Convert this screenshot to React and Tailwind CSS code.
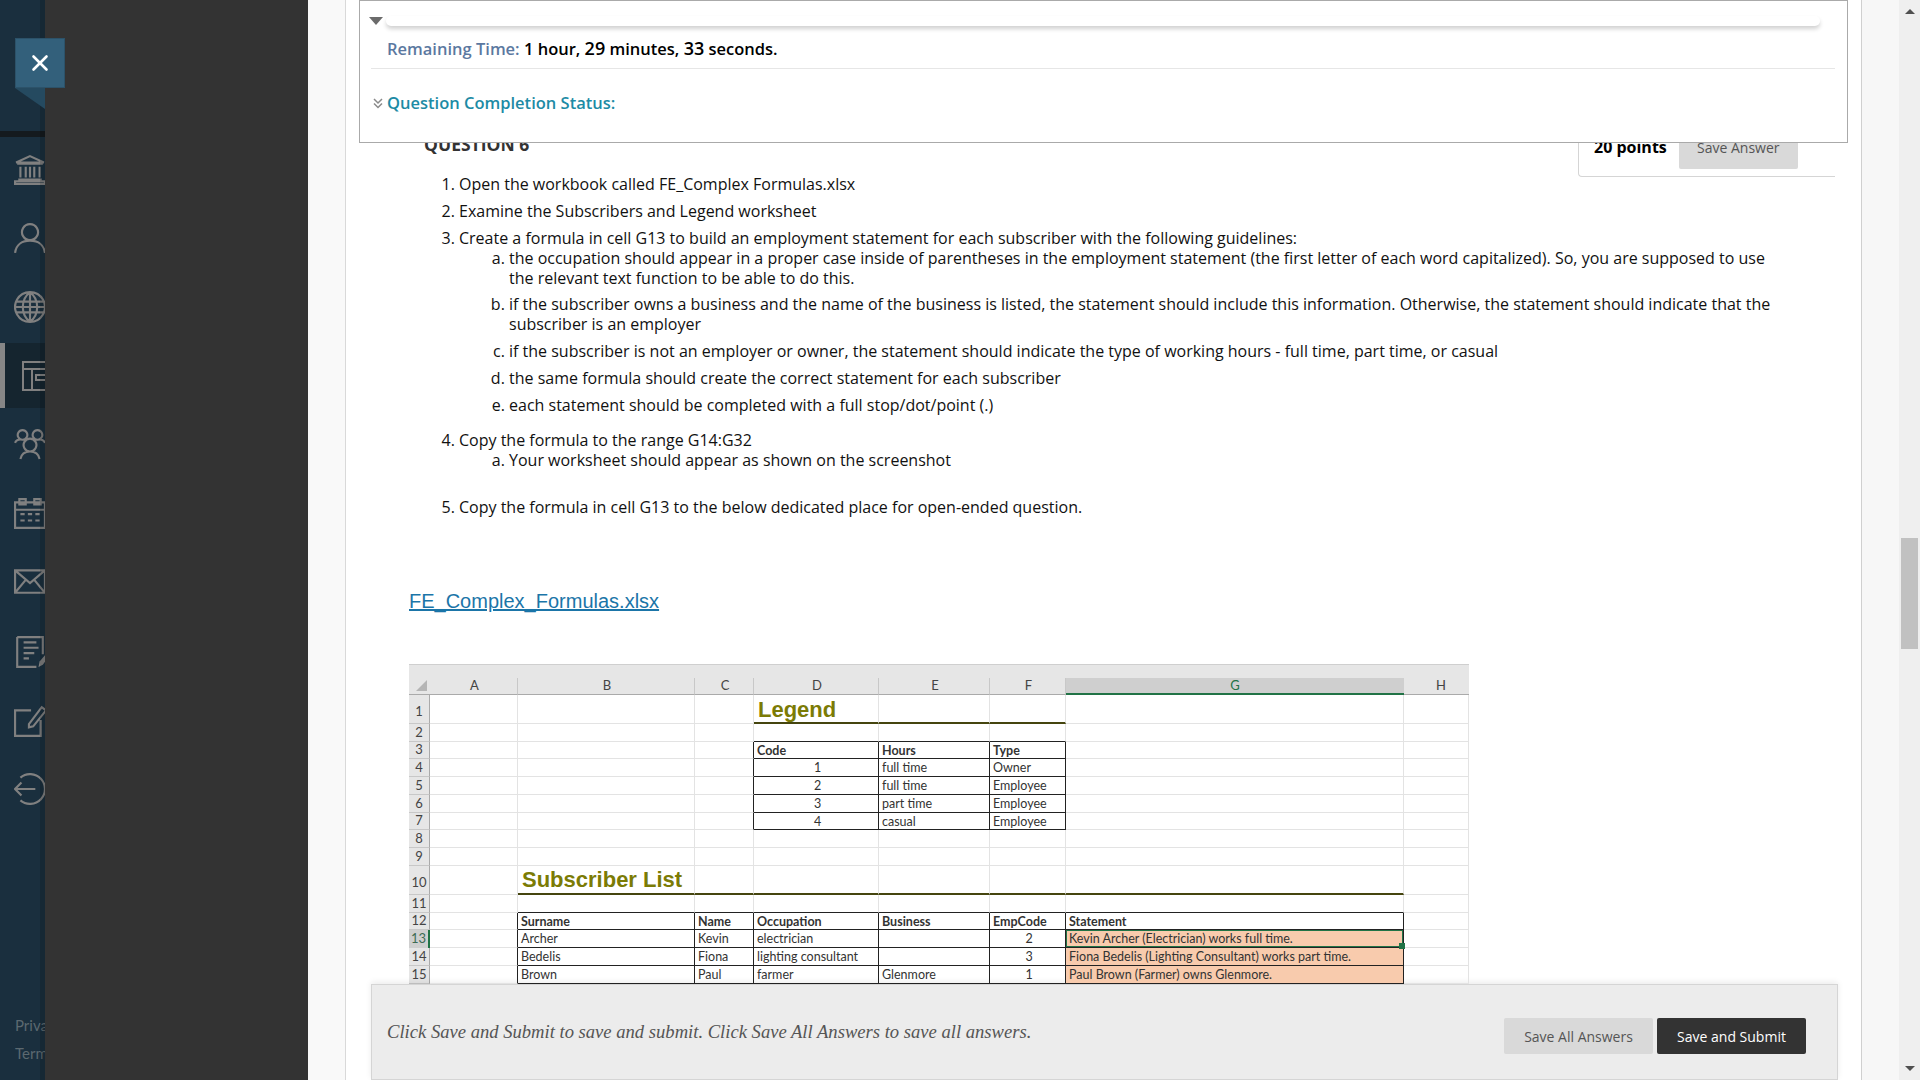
import { X } from "lucide-react";

const railIcons = [
  {
    name: "institution",
    d: "M15 2 L28 8 H2 Z M3 9 H27 M6 12 V22 M11 12 V22 M15 12 V22 M19 12 V22 M24 12 V22 M4 24 H26 M1 28 H29 V25.5 H1 Z",
  },
  {
    name: "profile",
    d: "M15 2 a7.5 7.5 0 1 0 0.01 0 Z M1 29 C2 21 8 17.5 15 17.5 C22 17.5 28 21 29 29",
  },
  {
    name: "globe",
    d: "M15 1 a14 14 0 1 0 0.01 0 Z M15 1 C6 8 6 22 15 29 C24 22 24 8 15 1 M15 1 V29 M2 10 H28 M2 20 H28 M1 15 H29",
  },
  {
    name: "courses",
    active: true,
    d: "M1 1 H32 V29 H1 Z M1 8 H32 M10 8 V29 M14 14 H24 V19 H14 Z",
  },
  {
    name: "groups",
    d: "M8 2 a4.5 4.5 0 1 0 0.01 0 Z M22 2 a4.5 4.5 0 1 0 0.01 0 Z M1 14 C2 11 5 10.5 8 11 M29 14 C28 11 25 10.5 22 11 M15 10 a6 6 0 1 0 0.01 0 Z M6 29 C7 24 10 22 15 22 C20 22 23 24 24 29",
  },
  {
    name: "calendar",
    d: "M1 5 H29 V29 H1 Z M5 2 H11 V7 H5 Z M19 2 H25 V7 H19 Z M1 12 H29 M6 16 H10 M13 16 H17 M20 16 H24 M6 22 H10 M13 22 H17 M20 22 H24",
  },
  {
    name: "messages",
    d: "M1 5 H29 V26 H1 Z M1 5 L15 17 L29 5 M1 26 L11 14 M29 26 L19 14",
  },
  {
    name: "grades",
    d: "M3 1 H27 V17 M21 29 H3 V1 M9 6 H21 M9 11 H23 M9 16 H19 M9 21 H14",
    pen: "M23 29 L24 24 L29 18 L32 20 L27 27 Z",
  },
  {
    name: "tools",
    d: "M16 5 H1 V29 H25 V14 M14 18 L26 2 L30 5 L18 20 L14 21 Z",
  },
  {
    name: "sign out",
    d: "M6 4.3 A14 14 0 1 1 6 25.7 M1 15 H20 M7 9 L1 15 L7 21",
  },
];

const sheetCols = ["A", "B", "C", "D", "E", "F", "G", "H"];
const rowNumbers = [1, 2, 3, 4, 5, 6, 7, 8, 9, 10, 11, 12, 13, 14, 15];

// sheet content, keyed by row then column
const cells = {
  3: { D: "Code", E: "Hours", F: "Type" },
  4: { D: "1", E: "full time", F: "Owner" },
  5: { D: "2", E: "full time", F: "Employee" },
  6: { D: "3", E: "part time", F: "Employee" },
  7: { D: "4", E: "casual", F: "Employee" },
  12: { B: "Surname", C: "Name", D: "Occupation", E: "Business", F: "EmpCode", G: "Statement" },
  13: { B: "Archer", C: "Kevin", D: "electrician", F: "2", G: "Kevin Archer (Electrician) works full time." },
  14: { B: "Bedelis", C: "Fiona", D: "lighting consultant", F: "3", G: "Fiona Bedelis (Lighting Consultant) works part time." },
  15: { B: "Brown", C: "Paul", D: "farmer", E: "Glenmore", F: "1", G: "Paul Brown (Farmer) owns Glenmore." },
};

const inLegend = (row, col) => row >= 3 && row <= 7 && "DEF".includes(col);
const inSubscribers = (row, col) => row >= 12 && "BCDEFG".includes(col);

const cellClass = (row, col) => {
  const boxed = inLegend(row, col) || inSubscribers(row, col);
  const next = sheetCols[sheetCols.indexOf(col) + 1] || "";
  const right = boxed || (next && (inLegend(row, next) || inSubscribers(row, next)));
  const heavyBottom = (row === 1 && "DEF".includes(col)) || (row === 10 && "BCDEFG".includes(col));
  const bottom = boxed || (row === 2 && "DEF".includes(col)) || (row === 11 && "BCDEFG".includes(col));
  return [
    "relative flex items-center whitespace-nowrap border-r border-b pl-[3px] text-[12.5px]",
    row === 1 || row === 10 ? "" : "pt-[2px]",
    right ? "border-r-[#222]" : "border-r-[#e3e3e3]",
    heavyBottom ? "border-b-2 border-b-[#45450f]" : bottom ? "border-b-[#222]" : "border-b-[#e3e3e3]",
    (row === 3 || row === 12) && boxed ? "font-bold" : "",
    col === "G" && row >= 13 ? "bg-[#f8cbad]" : "",
    (col === "D" && row >= 4 && row <= 7) || (col === "F" && row >= 13) ? "justify-center" : "",
  ].join(" ");
};

const Spreadsheet = () => (
  <div className="mt-[51px] ml-[63px] w-[1060px] font-['Lato',sans-serif] text-[#333]">
    <div className="h-[14px] border-t border-[#cfcfcf] bg-[#e6e6e6]" />
    <div className="grid grid-cols-[21px_88px_177px_59px_125px_111px_76px_338px_65px] grid-rows-[17px_29px_18px_17px_18px_18px_18px_17px_18px_18px_29px_18px_17px_18px_18px_18px]">
      <div className="flex items-end justify-end border-b border-[#aaa] bg-[#e6e6e6] p-[3px]">
        <div className="h-0 w-0 border-b-[11px] border-l-[11px] border-b-[#b5b5b5] border-l-transparent" />
      </div>
      {sheetCols.map((col) => (
        <div
          key={col}
          className={
            col === "G"
              ? "flex items-center justify-center border-b-2 border-[#217346] bg-[#cfcfcf] text-[13px] text-[#217346]"
              : col === "H"
                ? "flex items-center justify-center border-b border-b-[#aaa] bg-[#e6e6e6] pl-[9px] text-[13px] text-[#444]"
                : "flex items-center justify-center border-r border-b border-r-[#c8c8c8] border-b-[#aaa] bg-[#e6e6e6] pl-[2px] text-[13px] text-[#444]"
          }
        >
          {col}
        </div>
      ))}
      {rowNumbers.map((row) => [
        <div
          key={`n${row}`}
          className={
            row === 13
              ? "flex items-center justify-center border-r-2 border-[#217346] bg-[#cfcfcf] text-[13px] text-[#3d6b54]"
              : row === 1 || row === 10
                ? "flex items-end justify-center border-r border-b border-r-[#aaa] border-b-[#c8c8c8] bg-[#e6e6e6] pb-[2px] text-[13px] text-[#444]"
                : "flex items-center justify-center border-r border-b border-r-[#aaa] border-b-[#c8c8c8] bg-[#e6e6e6] text-[13px] text-[#444]"
          }
        >
          {row}
        </div>,
        ...sheetCols.map((col) => (
          <div key={`${col}${row}`} className={cellClass(row, col)}>
            {row === 1 && col === "D" && (
              <span className="pt-[2px] pl-[1px] font-['Liberation_Sans',sans-serif] text-[22px] font-bold text-[#7b7b05]">Legend</span>
            )}
            {row === 10 && col === "B" && (
              <span className="pl-[1px] font-['Liberation_Sans',sans-serif] text-[22px] font-bold text-[#7b7b05]">Subscriber List</span>
            )}
            {cells[row]?.[col]}
            {row === 13 && col === "G" && (
              <>
                <div className="absolute inset-0 border border-[#217346]" />
                <div className="absolute -right-[2px] -bottom-[2px] z-10 h-[6px] w-[6px] bg-[#217346]" />
              </>
            )}
          </div>
        )),
      ])}
    </div>
  </div>
);

const App = () => {
  return (
    <div className="relative flex h-screen w-full overflow-hidden bg-[#333] font-['Open_Sans',sans-serif]">
      {/* left rail, mostly covered by the dark panel */}
      <div className="relative flex w-[45px] shrink-0 flex-col overflow-hidden bg-[#1a2f3e]">
        <div className="h-[131px] shrink-0" />
        <div className="mb-[-1.5px] h-[6px] shrink-0 bg-[#141a1e]" />
        {railIcons.map((icon) => (
          <div
            key={icon.name}
            className={icon.name === "grades" ? "mt-[2px] flex h-[68.6px] shrink-0 items-center" : "flex h-[68.6px] shrink-0 items-center"}
          >
            {icon.active ? (
              <div className="flex h-[65px] w-full items-center border-l-[5px] border-[#868686] bg-[#15252f] pl-[17px]">
                <svg width="33" height="30" viewBox="0 0 33 30" fill="none" stroke="#808080" strokeWidth="2" className="shrink-0">
                  <path d={icon.d} />
                </svg>
              </div>
            ) : (
              <svg width="32" height="32" viewBox="0 0 30 30" fill="none" stroke="#808080" strokeWidth="2" className="ml-[14px] shrink-0">
                <path d={icon.d} />
                {icon.pen && <path d={icon.pen} fill="#808080" stroke="none" />}
              </svg>
            )}
          </div>
        ))}
        <div className="mt-auto mb-[13px] pl-[15px] font-['Lato',sans-serif] text-[15px] leading-[28px] text-[#5c6970]">
          <div>Privacy</div>
          <div>Terms</div>
        </div>
        <div className="absolute inset-y-0 right-0 w-[5px] bg-black/15" />
      </div>

      <div className="w-[263px] shrink-0 bg-[#333]" />

      {/* close tab sits over the rail and the panel */}
      <button className="absolute top-[38px] left-[15px] flex h-[50px] w-[50px] items-center justify-center border border-[#2c5269] bg-[#33607b]">
        <X size={26} color="#fff" strokeWidth={2.4} />
      </button>
      <div className="absolute top-[88px] left-[15px] h-0 w-0 border-t-[21px] border-l-[30px] border-t-[#254a60] border-l-transparent" />

      {/* page */}
      <div className="flex min-w-0 flex-1 bg-[#f9f9f9]">
        <div className="w-[38px] shrink-0 border-r border-[#d9d9d9]" />
        <div className="flex w-[1515px] shrink-0 flex-col bg-white">
          <div className="ml-[13px] h-[143px] w-[1489px] shrink-0 border border-[#aaa] bg-white">
            <div className="flex items-center pt-[15px] pl-[9px]">
              <div className="h-0 w-0 border-x-[7px] border-t-[8px] border-x-transparent border-t-[#6b6b6b]" />
              <div className="ml-[3px] h-[10px] w-[1434px] rounded-full bg-white shadow-[0_3px_4px_rgba(0,0,0,0.18)]" />
            </div>
            <div className="mt-[11px] ml-[27px] text-[16.5px] leading-[22px] font-semibold text-black">
              <span className="text-[#5b78a0]">Remaining Time: </span>
              1 hour, <span className="text-[18px]">29</span> minutes, <span className="text-[18px]">33</span> seconds.
            </div>
            <div className="mt-[8px] ml-[11px] w-[1464px] border-t border-[#e6e6e6]" />
            <div className="mt-[23px] flex items-center pl-[12px]">
              <svg width="12" height="12" viewBox="0 0 12 12" fill="none" stroke="#8a8a8a" strokeWidth="1.5">
                <path d="M2 2 L6 6 L10 2 M2 6.5 L6 10.5 L10 6.5" />
              </svg>
              <span className="ml-[3px] text-[16.5px] leading-[22px] font-semibold text-[#1d8ba5]">Question Completion Status:</span>
            </div>
          </div>

          <div className="min-h-0 flex-1 overflow-hidden">
            <div className="-mt-[10px] flex h-[44px]">
              <div className="-mt-[1px] ml-[78px] text-[17.5px] leading-[24px] font-bold text-[#333]">QUESTION 6</div>
              <div className="mr-[26px] ml-auto flex w-[257px] rounded-bl-[4px] border-b border-l border-[#d5d5d5] pb-[7px] pl-[15px]">
                <span className="pt-[2px] text-[16px] leading-[24px] font-bold text-black">20 points</span>
                <button className="ml-[12px] w-[119px] rounded-b-[2px] bg-[#d9d9d9] pb-[7px] text-[14px] leading-[20px] text-[#555]">
                  Save Answer
                </button>
              </div>
            </div>

            <ol className="-mt-[3px] list-decimal pl-[113px] text-[16px] leading-[20px] text-[#111]">
              <li>Open the workbook called FE_Complex Formulas.xlsx</li>
              <li className="mt-[7px]">Examine the Subscribers and Legend worksheet</li>
              <li className="mt-[7px]">
                Create a formula in cell G13 to build an employment statement for each subscriber with the following guidelines:
                <ol className="max-w-[1320px] list-[lower-alpha] pl-[50px]">
                  <li>
                    the occupation should appear in a proper case inside of parentheses in the employment statement (the first letter of each word capitalized). So, you are supposed to use the relevant text function to be able to do this.
                  </li>
                  <li className="mt-[6px]">
                    if the subscriber owns a business and the name of the business is listed, the statement should include this information. Otherwise, the statement should indicate that the subscriber is an employer
                  </li>
                  <li className="mt-[7px]">
                    if the subscriber is not an employer or owner, the statement should indicate the type of working hours - full time, part time, or casual
                  </li>
                  <li className="mt-[7px]">the same formula should create the correct statement for each subscriber</li>
                  <li className="mt-[7px]">each statement should be completed with a full stop/dot/point (.)</li>
                </ol>
              </li>
              <li className="mt-[15px]">
                Copy the formula to the range G14:G32
                <ol className="list-[lower-alpha] pl-[50px]">
                  <li>Your worksheet should appear as shown on the screenshot</li>
                </ol>
              </li>
              <li className="mt-[27px]">Copy the formula in cell G13 to the below dedicated place for open-ended question.</li>
            </ol>

            <a className="mt-[72px] ml-[63px] block w-fit font-['Liberation_Sans',sans-serif] text-[20px] leading-[24px] text-[#1b75a8] underline">
              FE_Complex_Formulas.xlsx
            </a>

            <Spreadsheet />
          </div>

          <div className="ml-[25px] flex h-[96px] w-[1467px] shrink-0 items-center border border-[#d5d5d5] bg-[#ececec] pr-[31px] pl-[15px] shadow-[0_-2px_6px_rgba(0,0,0,0.08)]">
            <p className="font-['Liberation_Serif',serif] text-[18.6px] text-[#555] italic">
              Click Save and Submit to save and submit. Click Save All Answers to save all answers.
            </p>
            <button className="mt-[8px] ml-auto h-[36px] w-[149px] rounded-[2px] bg-[#d9d9d9] text-[14px] text-[#555]">
              Save All Answers
            </button>
            <button className="mt-[8px] ml-[4px] h-[36px] w-[149px] rounded-[2px] bg-[#333] text-[14px] font-medium text-white">
              Save and Submit
            </button>
          </div>
        </div>

        <div className="w-[38px] shrink-0 border-l border-[#d0d0d0] bg-[#f7f7f7]" />

        {/* scrollbar */}
        <div className="flex w-[21px] shrink-0 flex-col items-center bg-[#efefef]">
          <div className="mt-[9px] h-0 w-0 border-x-[5px] border-b-[5px] border-x-transparent border-b-[#505050]" />
          <div className="mt-[524px] h-[111px] w-[17px] bg-[#c1c1c1]" />
          <div className="mt-auto mb-[9px] h-0 w-0 border-x-[5px] border-t-[5px] border-x-transparent border-t-[#505050]" />
        </div>
      </div>
    </div>
  );
};

export default App;
